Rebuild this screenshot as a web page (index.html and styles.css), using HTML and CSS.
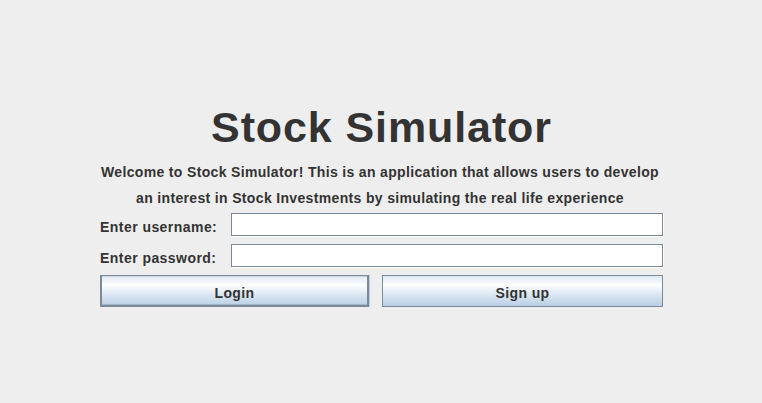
FILE: index.html
```html
<!DOCTYPE html>
<html>
<head>
<meta charset="utf-8">
<link rel="stylesheet" href="styles.css">
</head>
<body>
<main class="panel">
  <h1 class="title">Stock Simulator</h1>
  <p class="intro">Welcome to Stock Simulator! This is an application that allows users to develop<br>an interest in Stock Investments by simulating the real life experience</p>
  <form class="form">
    <label class="label" for="user">Enter username:</label>
    <input class="field" id="user" type="text">
    <label class="label" for="pass">Enter password:</label>
    <input class="field" id="pass" type="password">
    <div class="buttons">
      <button type="button" class="btn btn-default">Login</button>
      <button type="button" class="btn">Sign up</button>
    </div>
  </form>
</main>
</body>
</html>
```
FILE: styles.css
```css
html, body {
  margin: 0;
  padding: 0;
  background: #eeeeee;
}
body {
  width: 762px;
  height: 403px;
  overflow: hidden;
  font-family: "Liberation Sans", Arial, sans-serif;
  color: #333333;
}
.panel {
  display: flex;
  flex-direction: column;
  align-items: center;
  padding-top: 103px;
}
.title {
  margin: 0 0 0 1px;
  font-size: 43px;
  line-height: 48px;
  font-weight: bold;
  letter-spacing: 0.9px;
  color: #333333;
}
.intro {
  margin: 8px 2px 0 0;
  font-size: 14px;
  line-height: 26px;
  font-weight: bold;
  letter-spacing: 0.34px;
  text-align: center;
}
.form {
  margin-top: 2px;
  width: 563px;
  display: grid;
  grid-template-columns: 131px 1fr;
  row-gap: 8px;
  margin-left: 1px;
}
.label {
  font-size: 14px;
  font-weight: bold;
  letter-spacing: 0.45px;
  display: flex;
  align-items: center;
  padding-top: 4px;
}
.field {
  box-sizing: border-box;
  height: 23px;
  width: 432px;
  margin: 0;
  padding: 0 3px;
  border: 1px solid #7a8a99;
  background: #ffffff;
  box-shadow: 1px 1px 0 #ffffff;
  outline: none;
  font-family: "Liberation Sans", Arial, sans-serif;
  font-size: 13px;
}
.buttons {
  grid-column: 1 / -1;
  display: grid;
  grid-template-columns: 269px 281px;
  column-gap: 13px;
}
.btn {
  box-sizing: border-box;
  height: 32px;
  margin: 0;
  padding: 3px 0 0 0;
  border: 1px solid #7a8a99;
  background: linear-gradient(to bottom, #dde8f3 0%, #ffffff 30%, #dde8f3 60%, #b8cfe5 100%);
  font-family: "Liberation Sans", Arial, sans-serif;
  font-size: 14px;
  font-weight: bold;
  letter-spacing: 0.4px;
  color: #333333;
}
.btn-default {
  box-shadow: inset 1px 0 #7a8a99, inset -1px 0 #7a8a99, inset 0 -1px #7a8a99, inset 0 -2px #a3b8cc, inset 0 1px #c8d6e4, 1px 0 0 #b8cfe5;
}
```
